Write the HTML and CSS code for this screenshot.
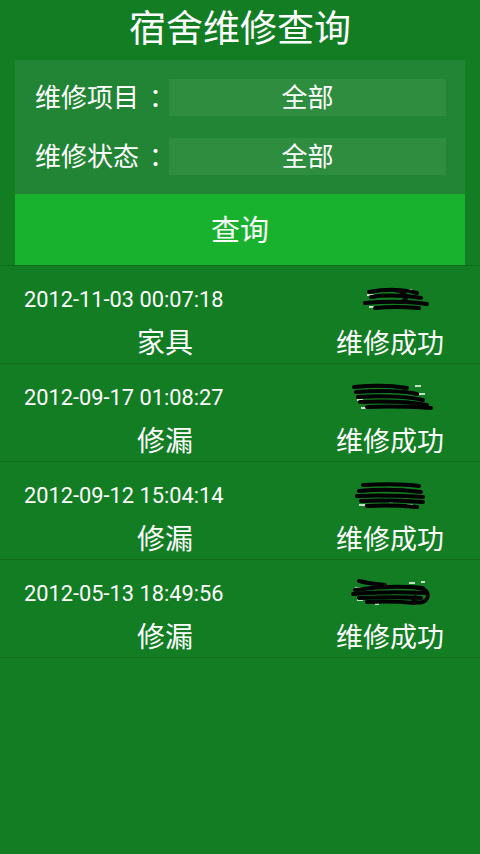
FILE: index.html
```html
<!DOCTYPE html>
<html lang="zh-CN">
<head>
<meta charset="utf-8">
<title>宿舍维修查询</title>
<link rel="stylesheet" href="styles.css">
</head>
<body>
<div class="screen">
  <h1 class="title">宿舍维修查询</h1>
  <section class="panel">
    <div class="field">
      <span class="label">维修项目<span class="colon">：</span></span>
      <div class="spinner">全部</div>
    </div>
    <div class="field">
      <span class="label">维修状态<span class="colon">：</span></span>
      <div class="spinner">全部</div>
    </div>
  </section>
  <button class="query">查询</button>
  <ul class="records">
    <li class="record">
      <div class="time">2012-11-03 00:07:18</div>
      <div class="name">
        <svg width="90" height="32" viewBox="0 0 90 32">
          <g stroke="#fff" stroke-width="1.5" fill="none">
            <path d="M22 11h7M58 6h9M70 18h6M24 23h5"/>
          </g>
          <g stroke="#000" stroke-width="4" stroke-linecap="round" fill="none">
            <path d="M24 8C40 5 60 5 72 9"/>
            <path d="M26 13C45 10 62 12 76 14"/>
            <path d="M20 19C45 17 68 18 82 20"/>
            <path d="M30 24C48 22 62 23 74 24"/>
            <path d="M50 6C60 8 66 14 56 18"/>
          </g>
        </svg>
      </div>
      <div class="type">家具</div>
      <div class="status">维修成功</div>
    </li>
    <li class="record">
      <div class="time">2012-09-17 01:08:27</div>
      <div class="name">
        <svg width="90" height="32" viewBox="0 0 90 32">
          <g stroke="#fff" stroke-width="1.5" fill="none">
            <path d="M10 9h8M12 18h6M70 4h6M74 12h6M16 26h5"/>
          </g>
          <g stroke="#000" stroke-width="4" stroke-linecap="round" fill="none">
            <path d="M9 5C30 3 50 4 62 6"/>
            <path d="M11 10C35 8 60 9 72 12"/>
            <path d="M13 15C40 13 65 15 78 18"/>
            <path d="M15 20C40 19 65 20 82 23"/>
            <path d="M22 25C45 24 70 25 86 26"/>
          </g>
        </svg>
      </div>
      <div class="type">修漏</div>
      <div class="status">维修成功</div>
    </li>
    <li class="record">
      <div class="time">2012-09-12 15:04:14</div>
      <div class="name">
        <svg width="90" height="32" viewBox="0 0 90 32">
          <g stroke="#fff" stroke-width="1.5" fill="none">
            <path d="M14 25h6M44 22h4M62 25h6M52 10h5"/>
          </g>
          <g stroke="#000" stroke-width="4" stroke-linecap="round" fill="none">
            <path d="M18 5C40 4 60 4 74 6"/>
            <path d="M14 11C35 9 60 10 76 12"/>
            <path d="M12 16C35 15 60 16 78 17"/>
            <path d="M16 21C40 20 62 21 78 22"/>
            <path d="M22 26C42 25 60 26 72 27"/>
          </g>
        </svg>
      </div>
      <div class="type">修漏</div>
      <div class="status">维修成功</div>
    </li>
    <li class="record">
      <div class="time">2012-05-13 18:49:56</div>
      <div class="name">
        <svg width="90" height="32" viewBox="0 0 90 32">
          <g stroke="#fff" stroke-width="1.5" fill="none">
            <path d="M10 10h8M12 22h6M64 5h6M76 4h4M70 24h5M30 26h4"/>
          </g>
          <g stroke="#000" stroke-width="4" stroke-linecap="round" fill="none">
            <path d="M14 3C22 5 30 6 40 7"/>
            <path d="M10 12C30 9 55 8 78 10"/>
            <path d="M8 16C30 14 55 14 80 15"/>
            <path d="M14 20C35 19 60 19 76 20"/>
            <path d="M22 24C40 23 60 24 70 25"/>
            <path d="M72 10C84 10 86 20 78 24C70 26 66 22 70 19"/>
          </g>
        </svg>
      </div>
      <div class="type">修漏</div>
      <div class="status">维修成功</div>
    </li>
  </ul>
</div>
</body>
</html>
```

FILE: styles.css
```css
html, body {
  margin: 0;
  padding: 0;
}

body {
  background: #137d24;
  font-family: "Roboto", "Noto Sans CJK SC", sans-serif;
  color: #ffffff;
}

.screen {
  width: 480px;
  height: 854px;
  overflow: hidden;
}

.title {
  box-sizing: border-box;
  margin: 0;
  height: 60px;
  padding-top: 2px;
  line-height: 56px;
  font-size: 37px;
  font-weight: normal;
  text-align: center;
}

.panel {
  margin: 0 15px;
  background: #218535;
  padding: 19px 19px 19px 20px;
  display: flex;
  flex-direction: column;
  gap: 22px;
}

.field {
  display: flex;
  align-items: center;
  height: 37px;
}

.label {
  box-sizing: border-box;
  width: 134px;
  height: 37px;
  padding-top: 1px;
  font-size: 26px;
  line-height: 37px;
  white-space: nowrap;
  overflow: visible;
}

.colon {
  margin-left: 10px;
}

.spinner {
  box-sizing: border-box;
  flex: 1;
  height: 37px;
  padding-top: 2px;
  line-height: 35px;
  background: #2f8d40;
  text-align: center;
  font-size: 26px;
}

.query {
  box-sizing: border-box;
  display: block;
  width: 450px;
  height: 71px;
  margin: 0 15px;
  padding: 4px 0 0;
  border: 0;
  background: #18b22f;
  color: #ffffff;
  font-family: "Roboto", "Noto Sans CJK SC", sans-serif;
  font-size: 29px;
  line-height: 67px;
  text-align: center;
}

.records {
  list-style: none;
  margin: 0;
  padding: 0;
  border-top: 1px solid #0f6d1e;
}

.record {
  box-sizing: border-box;
  height: 98px;
  padding-top: 13px;
  border-bottom: 1px solid #0f6d1e;
  display: grid;
  grid-template-columns: 330px 120px;
  grid-template-rows: 42px 42px;
}

.time {
  padding-left: 24px;
  font-size: 21.8px;
  line-height: 42px;
  white-space: nowrap;
}

.name {
  display: flex;
  align-items: center;
  justify-content: center;
}

.name svg {
  display: block;
}

.type {
  margin-top: 2px;
  text-align: center;
  font-size: 28px;
  line-height: 42px;
}

.status {
  margin-top: 2px;
  text-align: center;
  font-size: 27px;
  line-height: 42px;
  white-space: nowrap;
}
```
